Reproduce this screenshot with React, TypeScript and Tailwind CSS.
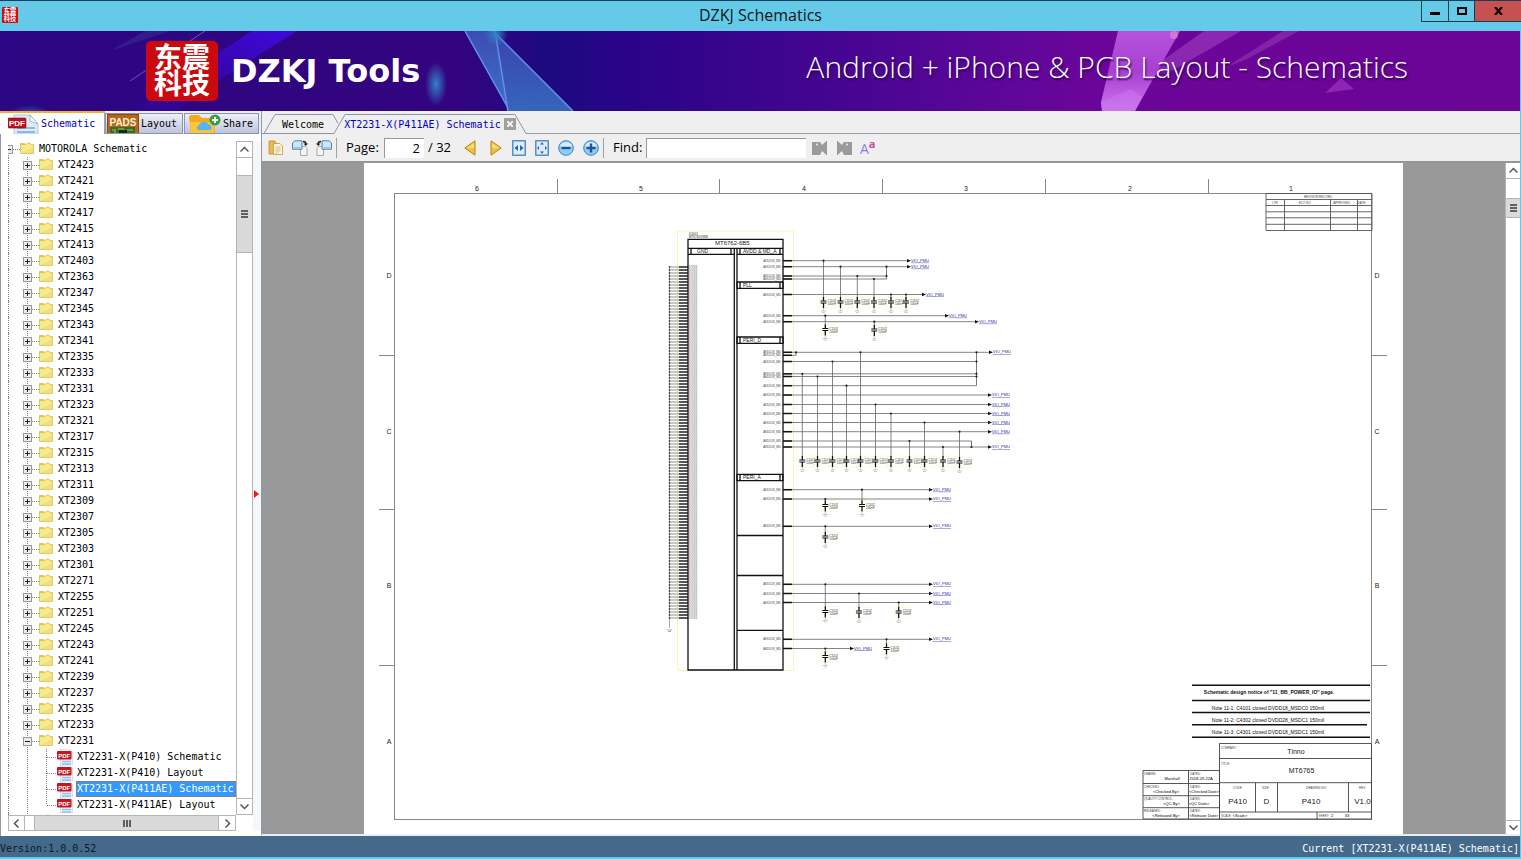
import React, { useState } from 'react';

const MODELS = [
  '2423', '2421', '2419', '2417', '2415', '2413', '2403', '2363', '2347', '2345', '2343', '2341',
  '2335', '2333', '2331', '2323', '2321', '2317', '2315', '2313', '2311', '2309', '2307', '2305',
  '2303', '2301', '2271', '2255', '2251', '2245', '2243', '2241', '2239', '2237', '2235', '2233',
];

const FILES = [
  'XT2231-X(P410) Schematic',
  'XT2231-X(P410) Layout',
  'XT2231-X(P411AE) Schematic',
  'XT2231-X(P411AE) Layout',
];

/* ---------- icons ---------- */

const FolderIcon = () => (
  <svg className="h-4 w-[14px] shrink-0" viewBox="0 0 14 16">
    <path d="M.5 4.500v-2h4l1.500 2z" fill="#f3dc6c" stroke="#cfae52" strokeWidth=".7" />
    <path d="M.5 3.500H6L7.500 2H10L11 3.500h2.500v9H.5z" fill="#f8e98c" stroke="#d5b960" strokeWidth=".8" />
    <path d="M1 12.500h12.500V6z" fill="#eed75e" opacity=".55" />
  </svg>
);

const FileIcon = () => (
  <svg className="h-4 w-4 shrink-0" viewBox="0 0 16 16">
    <path d="M3.500 0H12l3.500 3.500V16h-12z" fill="#eff7fd" stroke="#b7cede" strokeWidth=".6" />
    <path d="M5 12.500h9M5 15h9" stroke="#8cc0e8" strokeWidth="1.300" />
    <rect x="0" y="2" width="14.500" height="8.500" rx="1" fill="#c1171e" />
    <text x="7.200" y="8.600" fontSize="6" fontWeight="bold" textAnchor="middle" fill="#fff" fontFamily="Liberation Sans, sans-serif">PDF</text>
  </svg>
);

const Toggle = ({ open }: { open?: boolean }) => (
  <svg className="h-4 w-4" viewBox="0 0 16 16" shapeRendering="crispEdges">
    <path d="M4.500 0v16M9 8.500h7" stroke="#808080" strokeDasharray="1 1" />
    <rect x=".5" y="4.500" width="8" height="8" fill="#ececec" stroke="#989898" />
    <path d={open ? 'M2 8.500h5' : 'M2 8.500h5M4.500 6v5'} stroke="#222" />
  </svg>
);

const Chevron = ({ d }: { d: string }) => (
  <svg className="h-[9px] w-[9px]" viewBox="0 0 9 9">
    <path d={d} fill="none" stroke="#555" strokeWidth="1.500" />
  </svg>
);
const UP = 'M.5 6.500l4-4 4 4';
const DOWN = 'M.5 2.500l4 4 4-4';
const LEFT = 'M6.500 .5l-4 4 4 4';
const RIGHT = 'M2.500 .5l4 4-4 4';

const PdfTabIcon = () => (
  <svg className="h-5 w-8" viewBox="0 0 32 20">
    <path d="M6 1h16l8 9v10H6z" fill="#dcecf8" stroke="#a4bdd0" strokeWidth=".8" />
    <path d="M22 1v6l8 3z" fill="#fff" stroke="#94abc0" strokeWidth=".8" />
    <path d="M9 14h18M9 18h18" stroke="#8abbe0" strokeWidth="2" />
    <rect x="0" y="4" width="18" height="10" rx="1" fill="#b9141d" stroke="#8d0b12" strokeWidth=".6" />
    <text x="9" y="12" fontSize="8" fontWeight="bold" textAnchor="middle" fill="#fff" fontFamily="Liberation Sans, sans-serif">PDF</text>
  </svg>
);

const PadsIcon = () => (
  <svg className="h-[19px] w-8" viewBox="0 0 32 19">
    <rect x=".5" y=".5" width="31" height="19" fill="#b9661d" stroke="#8a4710" />
    <path d="M3 19v-6h25v6z" fill="#3c6b22" />
    <path d="M5 16h4M11 15h6v4M20 16h6M8 19v-2" stroke="#9ccc54" fill="none" />
    <rect x="12" y="16" width="8" height="3" fill="#1c2a14" />
    <text x="16" y="11.500" fontSize="10" fontWeight="bold" textAnchor="middle" fill="#fff3d6" fontFamily="Liberation Sans, sans-serif">PADS</text>
  </svg>
);

const ShareIcon = () => (
  <svg className="h-[19px] w-8" viewBox="0 0 32 19">
    <path d="M0 3q0-2 2-2h8l3 3h11q2 0 2 2v13H2z" fill="#f6a81c" />
    <path d="M1 8h25l-1 11H2z" fill="#fdc534" />
    <path d="M9 16a3 3 0 0 1 1-5 5 5 0 0 1 9-1 4 4 0 0 1 3 6z" fill="#58b4f0" />
    <circle cx="26" cy="6" r="5.500" fill="#35a046" />
    <path d="M26 3v6M23 6h6" stroke="#fff" strokeWidth="2" />
  </svg>
);

const CopyIcon = () => (
  <svg className="h-4 w-4" viewBox="0 0 16 16">
    <path d="M1 1h6l1 2v11H1z" fill="#eeb94a" stroke="#c28a28" strokeWidth=".8" />
    <path d="M5.500 3.500H12l2.500 2.500v8.500h-9z" fill="#fdf6dd" stroke="#c9a24c" strokeWidth=".9" />
    <path d="M7.500 7h5M7.500 9h5M7.500 11h5M7.500 13h3" stroke="#d1ab5d" strokeWidth=".8" />
  </svg>
);

const RotateIcon = ({ flip }: { flip?: boolean }) => (
  <svg className="h-4 w-4" viewBox="0 0 16 16">
    <g transform={flip ? 'matrix(-1 0 0 1 16 0)' : undefined}>
      <path d="M8.500 6.500h5l1.500 2v7H8.500z" fill="#f5f5f5" stroke="#a9a9a9" />
      <path d="M.5 3L3 .8h7v8.400H.5z" fill="#cfe4f7" stroke="#4f7fb0" />
      <path d="M1.500 7h8v1.500h-8z" fill="#9cc4e8" />
      <path d="M11 1.500q3 0 3 2.500" fill="none" stroke="#222" strokeWidth="1.300" />
      <path d="M11.500 3.500h4.500L13.800 6z" fill="#222" />
    </g>
  </svg>
);

const Triangle = ({ back }: { back?: boolean }) => (
  <svg className="h-4 w-3" viewBox="0 0 12 16">
    <path d={back ? 'M11 .8v14.400L.8 8z' : 'M1 .8v14.400L11.200 8z'} fill="#efc23a" stroke="#b98518" />
    <path d={back ? 'M10 3L3 8h7z' : 'M2 3l7 5H2z'} fill="#f9dc78" />
  </svg>
);

const FitIcon = ({ page }: { page?: boolean }) => (
  <svg className="h-4 w-[14px]" viewBox="0 0 14 16">
    <rect x=".8" y=".8" width="12.400" height="14.400" fill="#dcecfa" stroke="#3577b8" strokeWidth="1.200" />
    {page ? (
      <path d="M5 4.500l2-2.300 2 2.300zM5 11.500l2 2.300 2-2.300zM4 6L2 8l2 2zM10 6l2 2-2 2z" fill="#2468b0" />
    ) : (
      <path d="M6 5v6L2.500 8zM8 5v6l3.500-3z" fill="#2468b0" />
    )}
  </svg>
);

const ZoomIcon = ({ plus }: { plus?: boolean }) => (
  <svg className="h-4 w-4" viewBox="0 0 16 16">
    <circle cx="8" cy="8" r="7.300" fill="#8fccf4" stroke="#3a83c0" />
    <path d="M2 6a6.500 6.500 0 0 1 12 0q-6 3-12 0z" fill="#d3edfd" />
    <path d={plus ? 'M3.500 8h9M8 3.500v9' : 'M3.500 8h9'} stroke="#1b5596" strokeWidth="2.400" />
  </svg>
);

const FindIcon = ({ next }: { next?: boolean }) => (
  <svg className="h-4 w-4" viewBox="0 0 16 16">
    <g transform={next ? 'matrix(-1 0 0 1 16 0)' : undefined}>
      <path d="M0 2h8l2 3 5-4.500v15L10 11l-2 4H0z" fill="#9a9a9a" />
      <circle cx="5" cy="4.500" r="1" fill="#efefef" />
    </g>
  </svg>
);

const Seal = ({ size }: { size: string }) => (
  <svg className={size} viewBox="0 0 72 60" preserveAspectRatio="none" overflow="visible">
    <rect width="72" height="60" rx="5" fill="#cb0a10" />
    <g fill="#fff" fontSize="28" fontWeight="bold" textAnchor="middle" fontFamily="'Noto Sans CJK SC', sans-serif">
      <text x="36" y="27">东震</text>
      <text x="36" y="53">科技</text>
    </g>
  </svg>
);

/* ---------- header ---------- */

const TitleBar = () => (
  <header className="flex h-[31px] shrink-0 items-start border-t border-[#12405a] bg-[#65c9e8]">
    <div className="w-[100px] pt-[6px] pl-[2px]">
      <Seal size="h-4 w-4" />
    </div>
    <h1 className="flex-1 text-center text-base leading-[29px] text-[#101820]">DZKJ Schematics</h1>
    <div className="flex h-[21px] w-[100px] border-b border-l border-[#123c50]">
      <button aria-label="Minimize" className="flex w-[27px] items-center justify-center border-r border-[#123c50] pt-1">
        <span className="h-[3px] w-[10px] bg-black" />
      </button>
      <button aria-label="Maximize" className="flex w-[26px] items-center justify-center border-r border-[#123c50]">
        <span className="h-2 w-[10px] border-2 border-black" />
      </button>
      <button aria-label="Close" className="flex flex-1 items-center justify-center bg-[#c75050]">
        <svg className="h-2 w-[9px]" viewBox="0 0 9 8">
          <path d="M1 0l7 8M8 0L1 8" stroke="#000" strokeWidth="2.200" />
        </svg>
      </button>
    </div>
  </header>
);

const Banner = () => (
  <div className="relative h-20 shrink-0 overflow-hidden">
    <svg className="absolute inset-0 h-full w-full" viewBox="0 0 1520 80" preserveAspectRatio="none">
      <defs>
        <linearGradient id="sky">
          <stop offset="0" stopColor="#2c0684" />
          <stop offset=".3" stopColor="#33047f" />
          <stop offset=".36" stopColor="#1d0a80" />
          <stop offset=".41" stopColor="#290488" />
          <stop offset=".53" stopColor="#41058f" />
          <stop offset=".67" stopColor="#5f0799" />
          <stop offset=".72" stopColor="#6c0599" />
          <stop offset="1" stopColor="#6b0596" />
        </linearGradient>
        <linearGradient id="ray" x1="1" y1="0" x2="0" y2="1">
          <stop offset="0" stopColor="#3f08dc" />
          <stop offset="1" stopColor="#3606b0" stopOpacity=".3" />
        </linearGradient>
        <linearGradient id="teal" x1="0" y1="0" x2="0" y2="1">
          <stop offset="0" stopColor="#3f58bd" />
          <stop offset="1" stopColor="#3f84cf" />
        </linearGradient>
        <linearGradient id="pink" x1="0" y1="0" x2="0" y2="1">
          <stop offset="0" stopColor="#b355da" />
          <stop offset=".5" stopColor="#a93fd3" />
          <stop offset="1" stopColor="#cc74ee" />
        </linearGradient>
        <radialGradient id="glow">
          <stop offset="0" stopColor="#3480c8" />
          <stop offset="1" stopColor="#3480c8" stopOpacity="0" />
        </radialGradient>
      </defs>
      <rect width="1520" height="80" fill="url(#sky)" />
      <path d="M252 0h45L224 46 176 80h-46z" fill="url(#ray)" />
      <path d="M205 0l-75 50" stroke="#6c52b8" />
      <path d="M170 0h-25l-35 20z" fill="#3b3094" opacity=".5" />
      <ellipse cx="436" cy="53" rx="11" ry="22" fill="url(#glow)" />
      <ellipse cx="30" cy="84" rx="22" ry="10" fill="url(#glow)" opacity=".7" />
      <path d="M465 0h30l12 76z" fill="url(#teal)" opacity=".85" />
      <path d="M496 3l77 77h-66z" fill="url(#teal)" opacity=".75" />
      <path d="M465 0l43 77M495 0l13 80M496 3l77 77" stroke="#658ef0" strokeWidth="1.500" fill="none" />
      <circle cx="496" cy="3" r="12" fill="url(#glow)" />
      <path d="M1204 0h37l-73 42-28 4-8 25h-28z" fill="#9c3cbf" opacity=".65" />
      <path d="M1283 0h16l-52 28-24 10z" fill="#8930ac" opacity=".7" />
      <path d="M1118 0h62l-45 80h-33l-1-9z" fill="url(#pink)" />
      <path d="M1101 71l30-13 11 8-7 14h-33z" fill="#cb77ec" opacity=".55" />
      <circle cx="1174" cy="4" r="4" fill="#f38ad0" opacity=".6" />
      <path d="M1341 47l13 11-29 4z" fill="#982db8" opacity=".8" />
    </svg>
    <div className="relative flex h-full items-center justify-between pr-[112px] pl-[146px]">
      <div className="flex items-center gap-[13px]">
        <Seal size="h-[60px] w-[72px]" />
        <span className="font-['DejaVu_Sans',sans-serif] text-[32px] leading-[60px] font-bold text-white">DZKJ Tools</span>
      </div>
      <p className="pb-2 text-[30px] leading-[60px] font-light text-white [text-shadow:1px_2px_2px_#2a0550]">
        Android + iPhone &amp; PCB Layout - Schematics
      </p>
    </div>
  </div>
);

/* ---------- left panel ---------- */

const SideTabs = () => (
  <nav className="flex h-[23px] bg-[#efefef] font-['DejaVu_Sans_Mono',monospace] text-[10px]">
    <button className="flex w-[105px] items-end gap-[1px] overflow-hidden border-t-2 border-r border-[#f7ac34] border-r-[#9ba4b5] bg-white pl-2 leading-5 text-[#0000c8]">
      <PdfTabIcon />
      <span>Schematic</span>
    </button>
    <button className="mt-[2px] flex w-[78px] items-center gap-[2px] border border-[#8d95ae] bg-linear-to-b from-[#eef0f8] to-[#bfc4dd] pl-[1px]">
      <PadsIcon />
      <span>Layout</span>
    </button>
    <button className="mt-[2px] ml-[1px] flex w-[75px] items-center gap-[2px] border border-[#8d95ae] bg-linear-to-b from-[#eef0f8] to-[#bfc4dd] pl-1">
      <ShareIcon />
      <span>Share</span>
    </button>
  </nav>
);

const Tree = ({ selected, onSelect }: { selected: string; onSelect: (f: string) => void }) => (
  <ul className="h-0 min-h-full overflow-hidden font-['DejaVu_Sans_Mono',monospace] text-[10px] leading-4 whitespace-nowrap text-black">
    <li className="flex h-4 items-center">
      <svg className="h-4 w-3 shrink-0" viewBox="4 0 12 16" shapeRendering="crispEdges">
        <path d="M4.500 8v8M9 8.500h7" stroke="#808080" strokeDasharray="1 1" />
        <rect x="0" y="4.500" width="8.500" height="8" fill="#ececec" stroke="#989898" />
        <path d="M4 8.500h3" stroke="#222" />
      </svg>
      <FolderIcon />
      <span className="pl-[5px]">MOTOROLA Schematic</span>
    </li>
    {[...MODELS, '2231'].map((m) => (
      <li key={m} className="flex h-4 items-center border-l border-dotted border-[#808080] pl-[14px]">
        <button aria-label={`Expand XT${m}`} className="shrink-0">
          <Toggle open={m === '2231'} />
        </button>
        <FolderIcon />
        <button className="pl-[5px]">XT{m}</button>
      </li>
    ))}
    {FILES.map((f, i) => (
      <li key={f} className="flex h-4 items-center border-l border-dotted border-[#808080] pl-[18px]">
        <svg className="h-4 w-[30px] shrink-0" viewBox="0 0 30 16" shapeRendering="crispEdges">
          <path
            d={i === FILES.length - 1 ? 'M.5 0v16M19.500 0v8M20 8.500h10' : 'M.5 0v16M19.500 0v16M20 8.500h10'}
            stroke="#808080"
            strokeDasharray="1 1"
          />
        </svg>
        <FileIcon />
        <button
          onClick={() => onSelect(f)}
          className={
            f === selected
              ? 'ml-[3px] border border-dotted border-[#c86a10] bg-[#3399ff] pr-px leading-[14px] text-white'
              : 'pl-1'
          }
        >
          {f}
        </button>
      </li>
    ))}
    <li className="flex h-4 items-center border-l border-dotted border-[#808080] pl-[14px]">
      <Toggle />
      <FolderIcon />
    </li>
  </ul>
);

const Sidebar = () => {
  const [selected, setSelected] = useState(FILES[2]);

  return (
    <aside className="flex w-[261px] shrink-0 flex-col">
      <SideTabs />
      <div className="flex flex-1 border-l border-[#8c9aa8] bg-white pt-[7px] pb-[5px] pl-[7px]">
        <div className="flex min-w-0 flex-1 flex-col">
          <div className="min-h-0 flex-1">
            <Tree selected={selected} onSelect={setSelected} />
          </div>
          <div className="flex h-4 border border-[#b5b5b5]">
            <button aria-label="Scroll left" className="flex w-4 items-center justify-center border-r border-[#b5b5b5]">
              <Chevron d={LEFT} />
            </button>
            <div className="ml-[9px] flex flex-1 items-center justify-center gap-[1px] border-x border-[#b5b5b5] bg-[#dadada]">
              <span className="h-[7px] w-[2px] bg-[#606060]" />
              <span className="h-[7px] w-[2px] bg-[#606060]" />
              <span className="h-[7px] w-[2px] bg-[#606060]" />
            </div>
            <button aria-label="Scroll right" className="flex w-4 items-center justify-center">
              <Chevron d={RIGHT} />
            </button>
          </div>
        </div>
        <div className="mb-4 flex w-[17px] flex-col border border-[#b5b5b5]">
          <button aria-label="Scroll up" className="flex h-4 items-center justify-center border-b border-[#b5b5b5]">
            <Chevron d={UP} />
          </button>
          <div className="mt-[17px] flex h-[78px] flex-col items-center justify-center gap-[1px] border-y border-[#b5b5b5] bg-[#dadada]">
            <span className="h-[2px] w-[7px] bg-[#606060]" />
            <span className="h-[2px] w-[7px] bg-[#606060]" />
            <span className="h-[2px] w-[7px] bg-[#606060]" />
          </div>
          <button aria-label="Scroll down" className="mt-auto flex h-4 items-center justify-center border-t border-[#b5b5b5]">
            <Chevron d={DOWN} />
          </button>
        </div>
        <div className="flex w-2 items-center bg-[#f6f7f8] pt-4 pl-[1px]">
          <svg className="h-2 w-[5px]" viewBox="0 0 5 8">
            <path d="M0 0l5 4-5 4z" fill="#e8200c" />
          </svg>
        </div>
      </div>
    </aside>
  );
};

/* ---------- schematic sheet ---------- */

// [y, end x, has a net flag]
const NETS: [number, number, boolean][] = [
  [260.700, 907, true], [266.700, 907, true], [276, 886.500, false], [279, 886.500, false],
  [294.500, 922, true], [315.700, 945, true], [321.700, 975, true],
  [352.300, 989, true], [355.300, 796, false], [361.500, 976.500, false], [373.800, 976.500, false],
  [376.500, 976.500, false], [385.700, 976.500, false], [395, 988, true], [404.500, 988, true],
  [413.500, 988, true], [422.500, 988, true], [431.700, 988, true], [441, 971.500, false], [447, 988, true],
  [489.700, 929, true], [499, 929, true], [526.300, 929, true], [584.300, 929, true],
  [593.500, 929, true], [602.500, 929, true], [639.300, 929, true], [648.500, 850, true],
];

// [x, y of the net, y of the plates]
const CAPS: [number, number, number][] = [
  [823.500, 260.700, 302], [840.500, 266.700, 302], [857.300, 276, 302], [874, 279, 302], [891, 294.500, 302], [906, 294.500, 302],
  [825.300, 315.700, 329.500], [874.300, 321.700, 330],
  [802.300, 373.800, 461], [817.500, 376.500, 461], [832.500, 361.500, 461], [846.500, 385.700, 461], [860.500, 352.300, 461],
  [875.500, 404.500, 461], [891, 413.500, 461], [909.500, 441, 461], [924.500, 422.500, 461], [943, 447, 461], [959.500, 431.700, 462],
  [825.300, 499, 505.500], [862, 489.700, 505.500], [825.300, 526.300, 537],
  [825.300, 584.300, 611.500], [859, 593.500, 612], [898.700, 602.500, 612],
  [886.500, 639.300, 648.500], [825.300, 648.500, 656.500],
];

const JUNCTIONS = [
  [886.5, 266.7], [886.5, 276], [976.5, 352.3], [976.5, 361.5], [976.5, 373.8], [976.5, 376.5], [971.5, 447], [796, 352.3],
];

const PINS = Array.from({ length: 118 }, (_, i) => 267 + i * 3);

const Chip = () => (
  <g>
    <rect x="677.500" y="231" width="116" height="439.500" fill="none" stroke="#f5f5a0" strokeDasharray="3 1" />
    <g stroke="#333" strokeWidth=".7">
      <path d="M669.500 267V628M667 630h5M668 631.500h3" opacity=".6" />
      {PINS.map((y) => (
        <path key={y} d={`M669 ${y}h10`} opacity=".75" />
      ))}
    </g>
    {PINS.map((y) => (
      <g key={y}>
        <path d={`M679 ${y}h9`} stroke="#111" strokeWidth="1.400" />
        <circle cx="669.500" cy={y} r=".8" fill="#222" />
        <text x="689" y={y + 1} fontSize="3" fill="#666">DVSS</text>
      </g>
    ))}
    <g fill="none" stroke="#111" strokeWidth="1.300">
      <path d="M688 239.300h95V670h-95zM688 248.300h95M734.300 248v422M737 248v422" />
      <path d="M688 254.300h46M737 254.300h46M737 282h46v6.300h-46zM737 337h46v6.300h-46zM737 474.300h46v6.300h-46z" />
      <path d="M691 248v6M731 248v6M740 248v6M780 248v6M740 282v6M780 282v6M740 337v6M780 337v6M740 474v6M780 474v6" />
      <path d="M737 535.500h46M737 575.500h46M737 630.300h46" />
    </g>
    <g fill="#222">
      <text x="689" y="234.500" fontSize="3">U1001</text>
      <text x="689" y="238" fontSize="3">MT6762V/WB</text>
      <text x="715" y="244.500" fontSize="6">MT6762-6B5</text>
      <text x="697" y="253" fontSize="5">GND</text>
      <text x="743" y="253" fontSize="5">AVDD &amp; MD_A</text>
      <text x="743" y="286.500" fontSize="5">PLL</text>
      <text x="743" y="341.500" fontSize="5">PERI_D</text>
      <text x="743" y="479" fontSize="5">PERI_A</text>
    </g>
  </g>
);

const Nets = () => (
  <g>
    <path
      d="M886.500 266.700V279M976.500 352.300V385.700M971.500 441V447M796 352.300V355.300"
      stroke="#555"
      strokeWidth=".8"
    />
    {NETS.map(([y, end, flag]) => (
      <g key={y}>
        <path d={`M783 ${y}H${end}`} stroke="#666" strokeWidth=".8" />
        <path d={`M783 ${y}h9`} stroke="#111" strokeWidth="1.500" />
        <text x="781" y={y + 1} fontSize="3" textAnchor="end" fill="#444">AVDD18_MD</text>
        {flag && (
          <g>
            <path d={`M${end} ${y - 1.800}l4 1.800-4 1.800z`} fill="#111" />
            <text x={end + 4} y={y + 1} fontSize="4" fill="#2c2ca4" textDecoration="underline">VIO_PMU</text>
          </g>
        )}
      </g>
    ))}
    {CAPS.map(([x, top, y]) => (
      <g key={`${x}-${top}`}>
        <rect x={x - 4} y={y - 5} width="16" height="11" fill="none" stroke="#f7f7b0" strokeDasharray="2 1" strokeWidth=".7" />
        <path d={`M${x} ${top}V${y - 4}`} stroke="#666" strokeWidth=".8" />
        <path d={`M${x} ${y - 5}v4M${x} ${y + 1}v5`} stroke="#111" strokeWidth="1.300" />
        <path d={`M${x - 3} ${y - 1}h6M${x - 3} ${y + 1}h6`} stroke="#111" strokeWidth="1.200" />
        <path d={`M${x} ${y + 6}v3M${x - 2.500} ${y + 9}h5M${x - 1.500} ${y + 10.500}h3`} stroke="#aaa" strokeWidth=".6" />
        <circle cx={x} cy={top} r="1.100" fill="#222" />
        <text x={x + 4} y={y} fontSize="3" fill="#333">C1102</text>
        <text x={x + 4} y={y + 3} fontSize="3" fill="#333">100nF</text>
      </g>
    ))}
    {JUNCTIONS.map(([x, y]) => (
      <circle key={`${x}-${y}`} cx={x} cy={y} r="1.100" fill="#222" />
    ))}
  </g>
);

const TitleBlock = () => (
  <g>
    <g stroke="#111" strokeWidth="1.500">
      <path d="M1192 685.200h178M1192 700.500h178M1192 712.500h178M1192 724.700h175M1192 737.300h178" />
    </g>
    <g fill="#111" textAnchor="middle" fontSize="5">
      <text x="1269" y="694" fontWeight="bold">Schematic design notice of "11_BB_POWER_IO" page.</text>
      <text x="1268" y="709.500">Note 11-1: C4101 closed DVDD18_MSDC0 150mil</text>
      <text x="1268" y="721.500">Note 11-2: C4302 closed DVDD28_MSDC1 150mil</text>
      <text x="1268" y="734">Note 11-3: C4301 closed DVDD18_MSDC1 150mil</text>
    </g>
    <g fill="none" stroke="#444" strokeWidth=".9">
      <path d="M1219.500 743.500h152V819h-152zM1219.500 758.500h152M1219.500 782.700h152M1219.500 812h152" />
      <path d="M1255.500 782.700V812M1277.500 782.700V812M1348.500 782.700V812M1317 812v7" />
      <path d="M1143 770.500h76.500V819H1143zM1188.500 770.500V819M1143 783.500h76.500M1143 795.700h76.500M1143 807.700h76.500" />
    </g>
    <g fill="#222" textAnchor="middle">
      <text x="1296" y="753.500" fontSize="7">Tinno</text>
      <text x="1301.500" y="773" fontSize="7">MT6765</text>
      <g fontSize="8">
        <text x="1237.500" y="804">P410</text>
        <text x="1266.500" y="804">D</text>
        <text x="1311" y="804">P410</text>
        <text x="1362.500" y="804">V1.0</text>
      </g>
      <g fontSize="4" fill="#000">
        <text x="1172" y="780">Marshall</text>
        <text x="1201" y="780">2018-09-22A</text>
        <text x="1166" y="792.500">&lt;Checked By&gt;</text>
        <text x="1204" y="792.500">&lt;Checked Date&gt;</text>
        <text x="1171.500" y="804.500">&lt;QC By&gt;</text>
        <text x="1199" y="804.500">&lt;QC Date&gt;</text>
        <text x="1166" y="816.700">&lt;Released By&gt;</text>
        <text x="1204" y="816.700">&lt;Release Date&gt;</text>
        <text x="1240" y="816.700">&lt;Scale&gt;</text>
        <text x="1332" y="816.700">2</text>
        <text x="1347" y="816.700">33</text>
      </g>
    </g>
    <g fill="#444" fontSize="3">
      <text x="1221" y="749">COMPANY:</text>
      <text x="1221" y="764.500">TITLE:</text>
      <text x="1144" y="775">DRAWN:</text>
      <text x="1190" y="775">DATED:</text>
      <text x="1144" y="787.500">CHECKED:</text>
      <text x="1190" y="787.500">DATED:</text>
      <text x="1144" y="799.500">QUALITY CONTROL:</text>
      <text x="1190" y="799.500">DATED:</text>
      <text x="1144" y="811.500">RELEASED:</text>
      <text x="1190" y="811.500">DATED:</text>
      <text x="1233" y="789">CODE:</text>
      <text x="1262" y="789">SIZE:</text>
      <text x="1306" y="789">DRAWING NO:</text>
      <text x="1359" y="789">REV:</text>
      <text x="1221" y="816.500">SCALE:</text>
      <text x="1318.500" y="816.500">SHEET:</text>
    </g>
  </g>
);

const Sheet = () => (
  <svg
    className="h-full w-full"
    viewBox="364 163 1039 671"
    fontFamily="'Liberation Sans', Arial, sans-serif"
    role="img"
    aria-label="Schematic page 2"
  >
    <rect x="364" y="163" width="1039" height="671" fill="#fff" />
    <g fill="none" stroke="#888">
      <rect x="394.500" y="193.500" width="977" height="626" />
      <path d="M557.500 179v14M719.500 179v14M882.500 179v14M1045.500 179v14M1208.500 179v14" />
      <path d="M379 355.500h15M379 509.500h15M379 665.500h15M1372 355.500h15M1372 509.500h15M1372 665.500h15" />
    </g>
    <g fontSize="7" fill="#222" textAnchor="middle">
      {[477, 641, 804, 966, 1130, 1291].map((x, i) => (
        <text key={x} x={x} y="190.500">{6 - i}</text>
      ))}
      {[277.500, 433.500, 587.500, 743.500].map((y, i) => (
        <g key={y}>
          <text x="389" y={y}>{'DCBA'[i]}</text>
          <text x="1377" y={y}>{'DCBA'[i]}</text>
        </g>
      ))}
    </g>
    <g fill="none" stroke="#555" strokeWidth=".9">
      <path d="M1266 193.500h106v37h-106zM1266 199.500h106M1266 205.500h106M1266 211.800h106M1266 217.800h106M1266 224.300h106" />
      <path d="M1284.500 199.500v31M1330.500 199.500v31M1357.500 199.500v31" />
    </g>
    <g fontSize="3" fill="#444" textAnchor="middle">
      <text x="1318" y="198">REVISION RECORD</text>
      <text x="1275" y="204">LTR</text>
      <text x="1305" y="204">ECO NO:</text>
      <text x="1342" y="204">APPROVED:</text>
      <text x="1362" y="204">DATE:</text>
    </g>
    <Chip />
    <Nets />
    <TitleBlock />
  </svg>
);

/* ---------- right panel ---------- */

const DocTabs = () => (
  <nav className="flex h-[23px] bg-[#efefef] font-['DejaVu_Sans_Mono',monospace] text-[10px]">
    <div className="relative flex w-[264px] items-center pt-[3px]">
      <svg className="absolute inset-0 h-[23px] w-[264px]" viewBox="0 0 264 23">
        <path d="M0 22.500h2L13 3.500h58l5 9M0 22.500h72L83 3.500h170l11 19" fill="none" stroke="#8b95a3" />
      </svg>
      <button className="relative pl-5">Welcome</button>
      <button className="relative ml-5 text-[#0000c8]">XT2231-X(P411AE) Schematic</button>
      <button aria-label="Close tab" className="relative ml-auto mr-[10px] flex h-3 w-3 items-center justify-center bg-[#a0a0a0]">
        <svg className="h-[6px] w-[6px]" viewBox="0 0 6 6">
          <path d="M0 0l6 6M6 0L0 6" stroke="#fff" strokeWidth="1.600" />
        </svg>
      </button>
    </div>
    <div className="flex-1 border-b border-[#9a9ea4]" />
  </nav>
);

const Toolbar = () => {
  const [page, setPage] = useState('2');
  const [query, setQuery] = useState('');

  return (
    <div className="flex h-[29px] items-center border-b-2 border-[#969696] bg-[#efefef] pl-[6px] text-[13px] text-black">
      <div className="flex gap-2">
        <button aria-label="Copy"><CopyIcon /></button>
        <button aria-label="Rotate right"><RotateIcon /></button>
        <button aria-label="Rotate left"><RotateIcon flip /></button>
      </div>
      <div className="mr-[9px] ml-1 h-5 w-px bg-[#a0a0a0]" />
      <label htmlFor="page" className="w-[38px]">Page:</label>
      <input
        id="page"
        value={page}
        onChange={(e) => setPage(e.target.value)}
        className="h-5 w-10 border-t border-l border-[#9a9a9a] bg-white pr-1 text-right outline-none"
      />
      <span className="ml-1 w-9">/ 32</span>
      <div className="flex gap-[14px]">
        <button aria-label="Previous page"><Triangle back /></button>
        <button aria-label="Next page"><Triangle /></button>
      </div>
      <div className="ml-[10px] flex items-center gap-[9px]">
        <button aria-label="Fit width"><FitIcon /></button>
        <button aria-label="Fit page"><FitIcon page /></button>
        <button aria-label="Zoom out"><ZoomIcon /></button>
        <button aria-label="Zoom in"><ZoomIcon plus /></button>
      </div>
      <div className="mr-[9px] ml-1 h-5 w-px bg-[#a0a0a0]" />
      <label htmlFor="find" className="w-[33px]">Find:</label>
      <input
        id="find"
        value={query}
        onChange={(e) => setQuery(e.target.value)}
        className="h-5 w-40 border-t border-l border-[#9a9a9a] bg-white px-1 outline-none"
      />
      <div className="ml-[6px] flex items-center gap-2">
        <button aria-label="Find previous"><FindIcon /></button>
        <button aria-label="Find next"><FindIcon next /></button>
        <button aria-label="Match case" className="flex items-start leading-4">
          <span className="pt-[2px] text-[14px] text-[#8a80e0]">A</span>
          <span className="text-[11px] leading-[10px] font-bold text-[#c04aa8]">a</span>
        </button>
      </div>
    </div>
  );
};

const Viewer = () => (
  <div className="flex min-h-0 flex-1 bg-[#999999]">
    <div className="min-w-0 flex-1">
      <Sheet />
    </div>
    <div className="flex w-[15px] flex-col border-l border-[#b5b5b5] bg-white">
      <button aria-label="Page up" className="flex h-4 items-center justify-center border-b border-[#b5b5b5]">
        <Chevron d={UP} />
      </button>
      <div className="mt-[19px] flex h-5 flex-col items-center justify-center gap-[1px] border-y border-[#b5b5b5] bg-[#dadada]">
        <span className="h-[2px] w-[7px] bg-[#606060]" />
        <span className="h-[2px] w-[7px] bg-[#606060]" />
        <span className="h-[2px] w-[7px] bg-[#606060]" />
      </div>
      <button aria-label="Page down" className="mt-auto flex h-[14px] items-center justify-center border-t border-[#b5b5b5]">
        <Chevron d={DOWN} />
      </button>
    </div>
  </div>
);

const App: React.FC = () => {
  return (
    <div className="flex h-screen flex-col border-b-2 border-[#65c9e8] font-['Open_Sans',sans-serif]">
      <TitleBar />
      <div className="flex min-h-0 flex-1 flex-col border-r border-[#65c9e8]">
        <Banner />
        <div className="flex min-h-0 flex-1">
          <Sidebar />
          <main className="flex min-w-0 flex-1 flex-col border-b-2 border-l border-[#e8eef4] border-l-[#8c9aa8]">
            <DocTabs />
            <Toolbar />
            <Viewer />
          </main>
        </div>
        <footer className="flex h-[21px] shrink-0 items-end justify-between bg-[#44698b] pr-[1px] font-['DejaVu_Sans_Mono',monospace] text-[10px] leading-4">
          <span className="text-[#101820]">Version:1.0.0.52</span>
          <span className="text-white">Current [XT2231-X(P411AE) Schematic]</span>
        </footer>
      </div>
    </div>
  );
};

export default App;
